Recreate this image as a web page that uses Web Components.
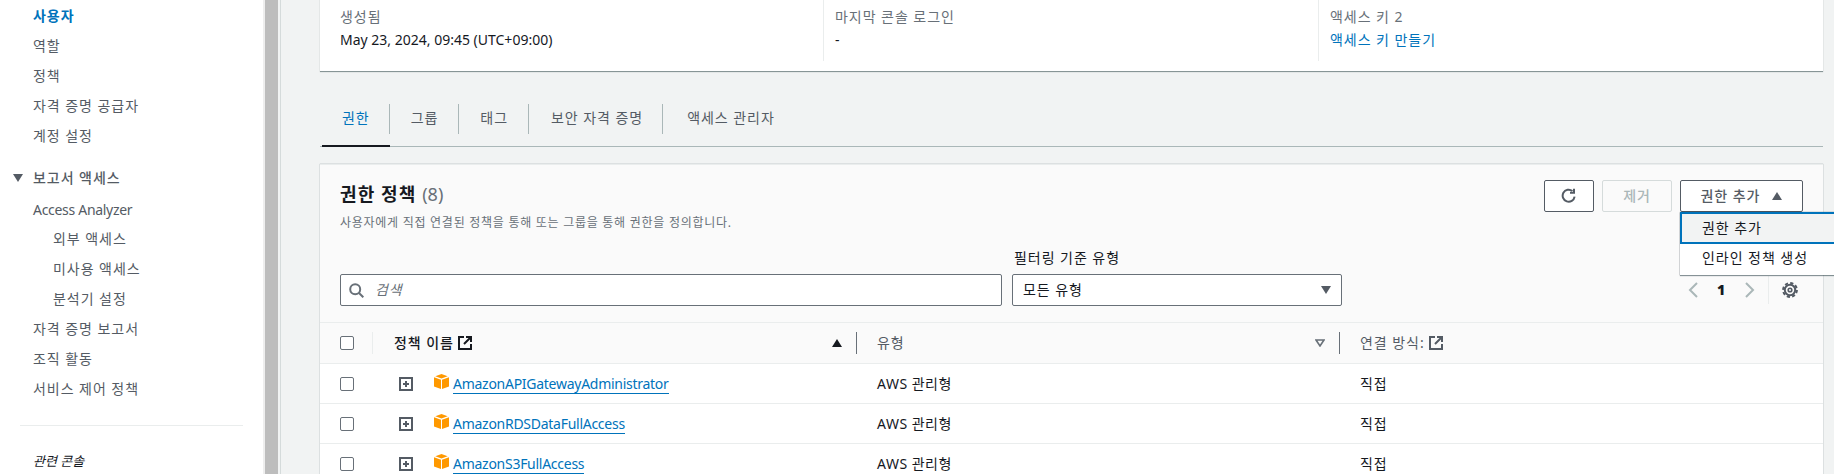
<!DOCTYPE html>
<html lang="ko">
<head>
<meta charset="utf-8">
<title>IAM user</title>
<style>
html,body{margin:0;height:474px;overflow:hidden;background:#f1f3f3;}
body{font:14px/20px "Noto Sans","Noto Sans CJK KR",sans-serif;letter-spacing:.95px;color:#16191f;display:flex;}
</style>
</head>
<body>
<iam-sidebar>
  <nav-item active>사용자</nav-item>
  <nav-item>역할</nav-item>
  <nav-item>정책</nav-item>
  <nav-item>자격 증명 공급자</nav-item>
  <nav-item>계정 설정</nav-item>
  <nav-section>보고서 액세스</nav-section>
  <nav-item style="letter-spacing:-.3px;height:29px">Access Analyzer</nav-item>
  <nav-item sub>외부 액세스</nav-item>
  <nav-item sub>미사용 액세스</nav-item>
  <nav-item sub>분석기 설정</nav-item>
  <nav-item>자격 증명 보고서</nav-item>
  <nav-item>조직 활동</nav-item>
  <nav-item>서비스 제어 정책</nav-item>
</iam-sidebar>
<fake-scrollbar></fake-scrollbar>
<iam-main>
  <user-summary></user-summary>
  <iam-tabs></iam-tabs>
  <policy-panel>
    <policy-row name="AmazonAPIGatewayAdministrator"></policy-row>
    <policy-row name="AmazonRDSDataFullAccess"></policy-row>
    <policy-row name="AmazonS3FullAccess"></policy-row>
  </policy-panel>
</iam-main>

<script>
const extIcon = `<svg width="14" height="14" viewBox="0 0 14 14" fill="none" stroke="currentColor" stroke-width="2"><path d="M6 1H1v12h12V8"/><path d="M8 1h5v5M13 1L6 8"/></svg>`;

class IamSidebar extends HTMLElement{
  constructor(){
    super();
    this.attachShadow({mode:'open'}).innerHTML=`
    <style>
    :host{display:block;width:265px;height:474px;box-sizing:border-box;border-right:2px solid #eee;background:#fff;flex:none;overflow:hidden;}
    .list{padding-top:1px;}
    hr{border:0;border-top:1px solid #eaeded;margin:21px 20px 0 20px;}
    .console{margin:25px 0 0 33px;font-style:italic;font-size:13px;letter-spacing:0;color:#16191f;line-height:20px;}
    </style>
    <div class="list"><slot></slot></div>
    <hr>
    <div class="console">관련 콘솔</div>`;
  }
}
customElements.define('iam-sidebar',IamSidebar);

class NavItem extends HTMLElement{
  constructor(){
    super();
    this.attachShadow({mode:'open'}).innerHTML=`
    <style>
    :host{display:block;height:30px;line-height:30px;padding-left:33px;color:#545b64;font-size:14px;white-space:nowrap;}
    :host([sub]){padding-left:53px;}
    :host([active]){color:#0073bb;font-weight:700;}
    </style><slot></slot>`;
  }
}
customElements.define('nav-item',NavItem);

class NavSection extends HTMLElement{
  constructor(){
    super();
    this.attachShadow({mode:'open'}).innerHTML=`
    <style>
    :host{display:flex;align-items:center;height:30px;margin:12px 0 2px;color:#545b64;font-size:14px;font-weight:500;padding-left:13px;}
    svg{margin-right:10px;}
    </style>
    <svg width="10" height="8" viewBox="0 0 10 8"><path d="M0 0h10L5 8z" fill="#545b64"/></svg><slot></slot>`;
  }
}
customElements.define('nav-section',NavSection);

class FakeScrollbar extends HTMLElement{
  constructor(){
    super();
    this.attachShadow({mode:'open'}).innerHTML=`
    <style>
    :host{display:block;flex:none;width:16px;height:474px;box-sizing:border-box;background:#f1f3f3;border-right:1px solid #d5dbdb;}
    div{width:13px;height:100%;background:#bdbdbd;}
    </style><div></div>`;
  }
}
customElements.define('fake-scrollbar',FakeScrollbar);

class IamMain extends HTMLElement{
  constructor(){
    super();
    this.attachShadow({mode:'open'}).innerHTML=`
    <style>:host{display:block;flex:1;min-width:0;padding:0 11px 0 39px;}</style><slot></slot>`;
  }
}
customElements.define('iam-main',IamMain);

class UserSummary extends HTMLElement{
  constructor(){
    super();
    this.attachShadow({mode:'open'}).innerHTML=`
    <style>
    :host{display:grid;grid-template-columns:503px 495px 1fr;height:71px;box-sizing:content-box;background:#fff;border-bottom:1px solid #879596;box-shadow:0 0 1px rgba(0,28,36,.3);}
    .col{height:61px;padding:6px 0 0 11px;box-sizing:border-box;border-left:1px solid #eaeded;}
    .col:first-of-type{border-left:0;padding-left:20px;}
    .col div{height:23px;line-height:22px;white-space:nowrap;}
    .l{color:#687078;}
    .date{letter-spacing:0;}
    a{color:#0073bb;text-decoration:none;}
    </style>
    <div class="col"><div class="l">생성됨</div><div class="date">May 23, 2024, 09:45 (UTC+09:00)</div></div>
    <div class="col"><div class="l">마지막 콘솔 로그인</div><div>-</div></div>
    <div class="col"><div class="l">액세스 키 2</div><div><a>액세스 키 만들기</a></div></div>`;
  }
}
customElements.define('user-summary',UserSummary);

class IamTabs extends HTMLElement{
  constructor(){
    super();
    this.attachShadow({mode:'open'}).innerHTML=`
    <style>
    :host{display:flex;height:49px;margin-top:26px;box-sizing:border-box;border-bottom:1px solid #aab7b8;padding-left:2px;color:#545b64;}
    .tab{height:48px;box-sizing:border-box;padding-top:6px;}
    .tab span{display:block;height:30px;line-height:28px;padding:0 20px 0 21px;border-right:1px solid #aab7b8;white-space:nowrap;}
    .tab.w span{padding:0 19px 0 22px;}
    .tab:last-child span{border-right:0;padding-left:24px;}
    .on{color:#0073bb;border-bottom:2px solid #16191f;height:49px;}
    .on span{padding:0 19px 0 20px;}
    </style>
    <div class="tab on"><span>권한</span></div>
    <div class="tab"><span>그룹</span></div>
    <div class="tab"><span>태그</span></div>
    <div class="tab w"><span>보안 자격 증명</span></div>
    <div class="tab"><span>액세스 관리자</span></div>`;
  }
}
customElements.define('iam-tabs',IamTabs);

class PolicyPanel extends HTMLElement{
  constructor(){
    super();
    this.attachShadow({mode:'open'}).innerHTML=`
    <style>
    :host{display:block;margin-top:17px;background:#fafafa;border-top:1px solid #eaeded;box-shadow:0 0 1px rgba(0,28,36,.5);position:relative;}
    .head{display:flex;justify-content:space-between;height:70px;padding:15px 20px 0;}
    h2{margin:0;font-size:18px;line-height:28px;font-weight:700;letter-spacing:1.1px;}
    h2 span{font-weight:400;color:#687078;letter-spacing:0;}
    p{margin:1px 0 0;font-size:12px;line-height:28px;color:#687078;white-space:nowrap;letter-spacing:.73px;}
    .actions{display:flex;gap:8px;height:32px;position:relative;}
    button{height:32px;box-sizing:border-box;border:1px solid #545b64;border-radius:2px;background:#fff;color:#545b64;font:inherit;letter-spacing:inherit;font-weight:500;padding:0;display:flex;align-items:center;justify-content:center;}
    .refresh{width:50px;}
    .remove{width:70px;border-color:#d5dbdb;color:#aab7b8;background:#fafafa;}
    .add{width:123px;gap:12px;}
    .menu{position:absolute;left:136px;top:32px;width:175px;height:63px;background:#fff;box-shadow:0 1px 1px rgba(0,28,36,.4),0 0 1px rgba(0,28,36,.6);z-index:2;font-size:14px;}
    .menu div{height:31px;line-height:28px;padding-left:22px;box-sizing:border-box;white-space:nowrap;}
    .menu .sel{height:32px;border:2px solid #0073bb;background:#f2f3f3;padding-left:20px;}
    .filters{display:flex;padding:0 20px 16px;height:56px;}
    .search{width:662px;height:32px;margin-top:24px;box-sizing:border-box;background:#fff;border:1px solid #687078;border-radius:2px;display:flex;align-items:center;padding-left:8px;color:#687078;font-style:italic;}
    .search svg{margin-right:11px;}
    .field{margin-left:10px;width:330px;}
    .field label{display:block;height:24px;line-height:16px;padding-left:2px;white-space:nowrap;}
    .select{height:32px;box-sizing:border-box;background:#fff;border:1px solid #687078;border-radius:2px;display:flex;align-items:center;justify-content:space-between;padding:0 10px;}
    .pager{margin:0 5px 2px auto;align-self:flex-end;display:flex;align-items:center;height:28px;color:#16191f;font-weight:700;}
    .pager b{width:47px;text-align:center;}
    .pager i{display:block;width:1px;height:28px;background:#eaeded;margin:0 13px;}
    .hd{display:grid;grid-template-columns:53px 483px 483px 1fr;height:40px;border-top:1px solid #eaeded;align-items:center;}
    .cb{width:14px;height:14px;box-sizing:border-box;border:1px solid #687078;border-radius:2px;background:#fff;margin-left:20px;}
    .c{display:flex;align-items:center;height:22px;border-left:1px solid #eaeded;padding-left:20px;gap:4px;color:#545b64;position:relative;}
    .c.a{border-left:0;padding-left:21px;color:#16191f;font-weight:500;box-shadow:-1px 0 0 #eaeded;}
    .c.b{border-left:1px solid #687078;}
    .sort{position:absolute;right:14px;top:7px;}
    </style>
    <div class="head">
      <div><h2>권한 정책 <span>(8)</span></h2><p>사용자에게 직접 연결된 정책을 통해 또는 그룹을 통해 권한을 정의합니다.</p></div>
      <div class="actions">
        <button class="refresh" aria-label="새로 고침"><svg width="16" height="16" viewBox="0 0 16 16" fill="none" stroke="#545b64" stroke-width="2"><path d="M13.6 8.6A6 6 0 1 1 11.4 3"/><path d="M13 .8v4h-4"/></svg></button>
        <button class="remove">제거</button>
        <button class="add">권한 추가<svg width="10" height="8" viewBox="0 0 10 8"><path d="M0 8h10L5 0z" fill="#545b64"/></svg></button>
        <div class="menu"><div class="sel">권한 추가</div><div>인라인 정책 생성</div></div>
      </div>
    </div>
    <div class="filters">
      <div class="search"><svg width="15" height="15" viewBox="0 0 15 15" fill="none" stroke="#687078" stroke-width="2"><circle cx="6.2" cy="6.2" r="5"/><path d="M10 10l4.300 4.300"/></svg>검색</div>
      <div class="field"><label>필터링 기준 유형</label><div class="select">모든 유형<svg width="10" height="8" viewBox="0 0 10 8"><path d="M0 0h10L5 8z" fill="#545b64"/></svg></div></div>
      <div class="pager">
        <svg width="10" height="16" viewBox="0 0 10 16" fill="none" stroke="#aab7b8" stroke-width="2"><path d="M9 1L2 8l7 7"/></svg>
        <b>1</b>
        <svg width="10" height="16" viewBox="0 0 10 16" fill="none" stroke="#aab7b8" stroke-width="2"><path d="M1 1l7 7-7 7"/></svg>
        <i></i>
        <svg width="16" height="16" viewBox="0 0 16 16" fill="none" stroke="#545b64"><circle cx="8" cy="8" r="5.200" stroke-width="2"/><circle cx="8" cy="8" r="1.800" stroke-width="1.600"/><circle cx="8" cy="8" r="6.900" stroke-width="2" stroke-dasharray="3.200 2.220"/></svg>
      </div>
    </div>
    <div class="hd">
      <div class="cb"></div>
      <div class="c a">정책 이름 ${extIcon}<svg class="sort" width="10" height="8" viewBox="0 0 10 8"><path d="M0 8h10L5 0z" fill="#16191f"/></svg></div>
      <div class="c b">유형<svg class="sort" width="10" height="8" viewBox="0 0 10 8" fill="none" stroke="#687078" stroke-width="1.600"><path d="M1 1h8L5 7z"/></svg></div>
      <div class="c b">연결 방식: ${extIcon}</div>
    </div>
    <slot></slot>`;
  }
}
customElements.define('policy-panel',PolicyPanel);

class PolicyRow extends HTMLElement{
  constructor(){
    super();
    this.attachShadow({mode:'open'}).innerHTML=`
    <style>
    :host{display:grid;grid-template-columns:53px 483px 483px 1fr;height:39px;background:#fff;border-top:1px solid #eaeded;align-items:center;}
    .cb{width:14px;height:14px;box-sizing:border-box;border:1px solid #687078;border-radius:2px;background:#fff;margin-left:20px;}
    .n{display:flex;align-items:center;padding-left:26px;}
    .cube{margin:-4px 4px 0 21px;}
    a{color:#0073bb;text-decoration:none;border-bottom:1px solid #0073bb;line-height:19px;white-space:nowrap;letter-spacing:-.27px;}
    .t{padding-left:21px;white-space:nowrap;}
    .m{letter-spacing:.5px;}
    </style>
    <div class="cb"></div>
    <div class="n">
      <svg width="14" height="14" viewBox="0 0 14 14"><rect x="1" y="1" width="12" height="12" fill="none" stroke="#545b64" stroke-width="2"/><path d="M7 4v6M4 7h6" stroke="#545b64" stroke-width="2"/></svg>
      <svg class="cube" width="15" height="15" viewBox="0 0 15 15" fill="#f90"><path d="M7.500 0l6.200 2.200-6.200 2.300L1.300 2.200z"/><path d="M0 3.200l7 2.500V15L0 12.500z"/><path d="M15 3.200L8 5.700V15l7-2.500z"/></svg>
      <a></a>
    </div>
    <div class="t m">AWS 관리형</div>
    <div class="t">직접</div>`;
    this.shadowRoot.querySelector('a').textContent=this.getAttribute('name');
  }
}
customElements.define('policy-row',PolicyRow);
</script>
</body>
</html>
